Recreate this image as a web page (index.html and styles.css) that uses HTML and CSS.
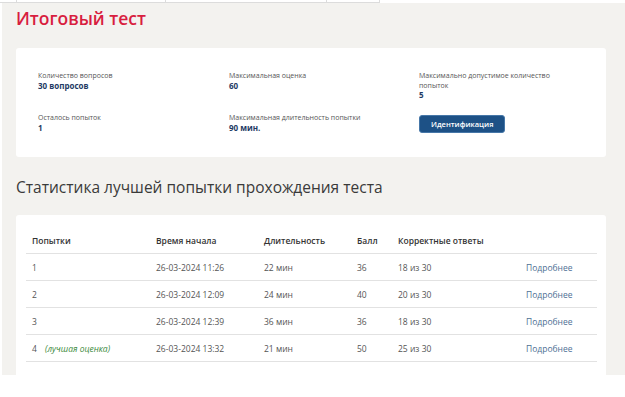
FILE: index.html
```html
<!DOCTYPE html>
<html lang="ru">
<head>
    <meta charset="UTF-8">
    <meta name="viewport" content="width=device-width, initial-scale=1.0">
    <title>Итоговый тест</title>
    <link rel="stylesheet" href="styles.css">
</head>
<body>
    <div class="top-strip">
        <span class="strip-cell w1"></span>
        <span class="strip-cell w2"></span>
        <span class="strip-cell w3"></span>
        <span class="strip-cell w4"></span>
    </div>

    <div class="page">
        <h1 class="page-title">Итоговый тест</h1>

        <div class="card info-card">
            <div class="info-item">
                <div class="info-label">Количество вопросов</div>
                <div class="info-value">30 вопросов</div>
            </div>
            <div class="info-item">
                <div class="info-label">Максимальная оценка</div>
                <div class="info-value">60</div>
            </div>
            <div class="info-item narrow">
                <div class="info-label">Максимально допустимое количество попыток</div>
                <div class="info-value">5</div>
            </div>
            <div class="info-item">
                <div class="info-label">Осталось попыток</div>
                <div class="info-value">1</div>
            </div>
            <div class="info-item">
                <div class="info-label">Максимальная длительность попытки</div>
                <div class="info-value">90 мин.</div>
            </div>
            <div class="info-item">
                <button type="button" class="btn-ident">Идентификация</button>
            </div>
        </div>

        <h2 class="section-title">Статистика лучшей попытки прохождения теста</h2>

        <div class="card stats-card">
            <table class="stats-table">
                <colgroup>
                    <col style="width: 124px">
                    <col style="width: 108px">
                    <col style="width: 93px">
                    <col style="width: 41px">
                    <col style="width: 128px">
                    <col>
                </colgroup>
                <thead>
                    <tr>
                        <th>Попытки</th>
                        <th>Время начала</th>
                        <th>Длительность</th>
                        <th>Балл</th>
                        <th>Корректные ответы</th>
                        <th></th>
                    </tr>
                </thead>
                <tbody>
                    <tr>
                        <td>1</td>
                        <td>26-03-2024 11:26</td>
                        <td>22 мин</td>
                        <td>36</td>
                        <td>18 из 30</td>
                        <td><a href="#" class="more-link">Подробнее</a></td>
                    </tr>
                    <tr>
                        <td>2</td>
                        <td>26-03-2024 12:09</td>
                        <td>24 мин</td>
                        <td>40</td>
                        <td>20 из 30</td>
                        <td><a href="#" class="more-link">Подробнее</a></td>
                    </tr>
                    <tr>
                        <td>3</td>
                        <td>26-03-2024 12:39</td>
                        <td>36 мин</td>
                        <td>36</td>
                        <td>18 из 30</td>
                        <td><a href="#" class="more-link">Подробнее</a></td>
                    </tr>
                    <tr>
                        <td>4 <span class="best-mark">(лучшая оценка)</span></td>
                        <td>26-03-2024 13:32</td>
                        <td>21 мин</td>
                        <td>50</td>
                        <td>25 из 30</td>
                        <td><a href="#" class="more-link">Подробнее</a></td>
                    </tr>
                </tbody>
            </table>
        </div>
    </div>
</body>
</html>
```

FILE: styles.css
```css
body {
    margin: 0;
    background-color: #ffffff;
    font-family: 'Open Sans', 'DejaVu Sans', sans-serif;
    color: #444;
}

/* cropped tab strip at the very top */
.top-strip {
    display: flex;
    height: 2px;
    width: 380px;
    border-bottom: 1px solid #dcdcdc;
}

.strip-cell {
    border-right: 1px solid #dcdcdc;
}

.w1 { width: 16px; }
.w2 { width: 148px; }
.w3 { width: 160px; }
.w4 { width: 52px; }

.page {
    background-color: #f3f2ef;
    margin-left: 2px;
    padding: 0 19px 0 14px;
    height: 372px;
}

.page-title {
    margin: 0;
    padding-top: 4px;
    font-size: 17.5px;
    line-height: 22px;
    font-weight: 600;
    color: #d81e3f;
}

.card {
    background-color: #ffffff;
    border-radius: 3px;
}

.info-card {
    margin-top: 19px;
    display: grid;
    grid-template-columns: 191px 190px 1fr;
    row-gap: 13px;
    padding: 23px 22px 24px;
    align-items: start;
}

.info-item.narrow {
    max-width: 140px;
}

.info-label {
    font-size: 7px;
    line-height: 9.5px;
    color: #555;
}

.info-value {
    font-size: 8px;
    line-height: 10px;
    font-weight: 700;
    color: #1e3a64;
}

.btn-ident {
    display: block;
    margin-top: 2px;
    height: 18px;
    padding: 0 11px;
    background-color: #1d5186;
    color: #ffffff;
    border: 1px solid #4677a8;
    border-radius: 3px;
    font-family: inherit;
    font-size: 7.5px;
    font-weight: 600;
    cursor: pointer;
}

.section-title {
    margin: 20px 0 18px;
    font-size: 15.5px;
    line-height: 20px;
    font-weight: 400;
    color: #3a3a3a;
}

.stats-card {
    padding: 12px 9px 40px 10px;
}

.stats-table {
    width: 100%;
    border-collapse: collapse;
    table-layout: fixed;
    font-size: 8.5px;
}

.stats-table th {
    text-align: left;
    font-weight: 600;
    color: #333;
    height: 25px;
    padding: 1px 0 0 6px;
    border-bottom: 1px solid #e2e2e2;
}

.stats-table td {
    height: 26px;
    padding: 0 0 0 6px;
    border-bottom: 1px solid #e2e2e2;
    color: #555;
}

.best-mark {
    margin-left: 6px;
    font-style: italic;
    color: #3b8a3b;
}

.more-link {
    color: #4d6f94;
    text-decoration: none;
}
```
